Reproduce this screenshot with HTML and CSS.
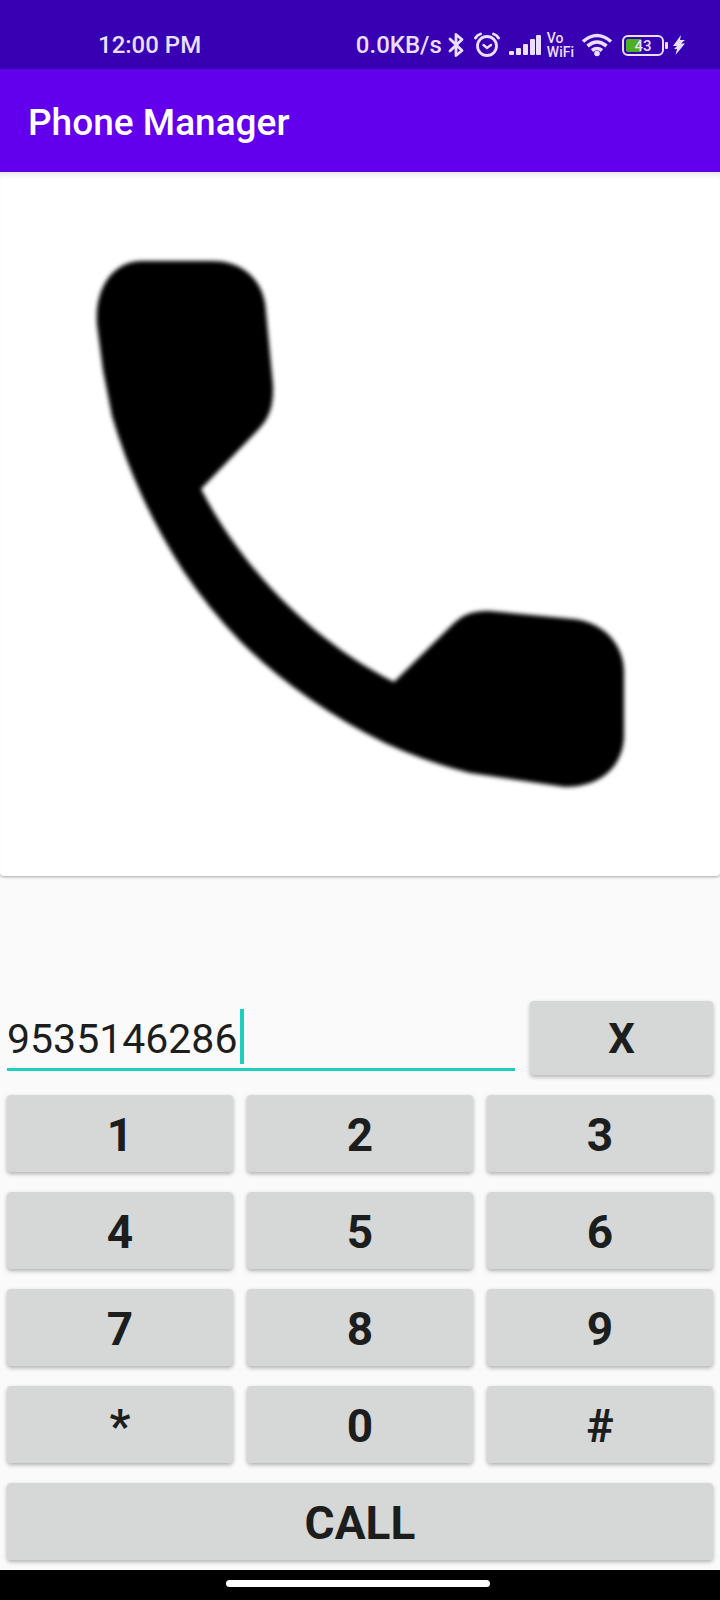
FILE: index.html
```html
<!DOCTYPE html>
<html lang="en">
<head>
<meta charset="utf-8">
<meta name="viewport" content="width=device-width, initial-scale=1">
<title>Phone Manager</title>
<link rel="stylesheet" href="styles.css">
</head>
<body>
<div class="status">
  <span class="clock">12:00 PM</span>
  <div class="indicators">
    <span class="speed">0.0KB/s</span>
    <svg class="bluetooth" viewBox="0 0 16 26" width="16" height="26"><path d="M2 7l12 11.500-6 5V2.500l6 5L2 19" fill="none" stroke="currentColor" stroke-width="2.800" stroke-linejoin="round" stroke-linecap="round"/></svg>
    <svg class="alarm" viewBox="0 0 26 26" width="26" height="26"><g fill="none" stroke="currentColor" stroke-linecap="round"><circle cx="13" cy="14" r="9.500" stroke-width="2.800"/><path d="M1.500 6Q3 3 6.500 2M24.500 6Q23 3 19.500 2" stroke-width="2.800"/><path d="M9.500 13l3.500 3 4-3" stroke-width="2.400"/></g></svg>
    <svg class="signal" viewBox="0 0 32 22" width="32" height="22"><g fill="currentColor"><rect x="0" y="17" width="5" height="4" rx="1"/><rect x="7" y="14" width="5" height="7" rx="1"/><rect x="14" y="10" width="5" height="11" rx="1"/><rect x="21" y="5" width="5" height="16" rx="1"/><rect x="27" y="1" width="5" height="20" rx="1"/></g></svg>
    <span class="vowifi"><span>Vo</span><span>WiFi</span></span>
    <svg class="wifi" viewBox="0 0 32 24" width="32" height="24"><g fill="none" stroke="currentColor" stroke-width="3.600"><path d="M2 8.500Q16-3.500 30 8.500"/><path d="M6.500 13Q16 5 25.500 13"/><path d="M11 17.500Q16 13.500 21 17.500"/></g><circle cx="16" cy="20.500" r="2.800" fill="currentColor"/></svg>
    <span class="battery"><span class="level">43</span></span>
    <svg class="bolt" viewBox="0 0 12 20" width="12" height="20"><path d="M8 0L0 11h4L1 14h3L2.500 20 12 8.500H8L12 5H7z" fill="currentColor"/></svg>
  </div>
</div>
<header class="appbar"><h1>Phone Manager</h1></header>
<main class="main">
  <div class="card">
    <svg class="handset" viewBox="0 172 720 704" role="img" aria-label="Phone"><path d="M142 261H213C244 261 265 282 266 312L273 385C274 408 268 420 258 430L201 489C240 565 310 640 394 682L452 625C464 613 474 611 490 611L573 619C604 622 624 645 624 672V735C624 765 602 787 565 787L470 773Q426 762 385 743Q346 724 310 699Q272 673 240 641Q209 609 184 572Q160 535 142 496Q124 457 112 416L103 370L97 325C94 287 114 261 142 261Z"/></svg>
  </div>
  <div class="entry">
    <label class="field">
      <input class="number" type="tel" value="9535146286" aria-label="Phone number">
      <span class="caret"></span>
    </label>
    <button class="key clear" type="button">X</button>
  </div>
  <div class="keypad">
    <button class="key" type="button">1</button>
    <button class="key" type="button">2</button>
    <button class="key" type="button">3</button>
    <button class="key" type="button">4</button>
    <button class="key" type="button">5</button>
    <button class="key" type="button">6</button>
    <button class="key" type="button">7</button>
    <button class="key" type="button">8</button>
    <button class="key" type="button">9</button>
    <button class="key" type="button">*</button>
    <button class="key" type="button">0</button>
    <button class="key" type="button">#</button>
    <button class="key call" type="button">CALL</button>
  </div>
</main>
<div class="navbar"><span class="pill"></span></div>
</body>
</html>
```

FILE: styles.css
```css
* {
  box-sizing: border-box;
}

body {
  margin: 0;
  min-height: 100vh;
  display: flex;
  flex-direction: column;
  background: #fafafa;
  color: #1c1e1d;
  font-family: Roboto, "Liberation Sans", sans-serif;
}

.status {
  display: flex;
  align-items: center;
  justify-content: space-between;
  padding: 21px 35px 0 98px;
  height: 69px;
  background: #3700b3;
  color: #eadfff;
  font-size: 24px;
  font-weight: 500;
  line-height: 28px;
}

.indicators {
  display: flex;
  align-items: center;
}

.bluetooth {
  margin-left: 6px;
}

.alarm {
  margin-left: 10px;
}

.signal {
  margin-left: 9px;
}

.vowifi {
  display: flex;
  flex-direction: column;
  margin-left: 6px;
  font-size: 14px;
  line-height: 14px;
}

.wifi {
  margin-left: 7px;
}

.battery {
  position: relative;
  display: flex;
  width: 42px;
  height: 21px;
  margin-left: 9px;
  padding: 2px;
  border: 2px solid currentColor;
  border-radius: 6px;
}

.battery::after {
  content: "";
  position: absolute;
  right: -6px;
  top: 5px;
  width: 3px;
  height: 7px;
  border-radius: 1px;
  background: currentColor;
}

.level {
  flex: 1;
  border-radius: 2px;
  background: linear-gradient(90deg, #4caf24 43%, transparent 43%);
  font-size: 15px;
  line-height: 14px;
  text-align: center;
}

.bolt {
  margin-left: 9px;
}

.appbar {
  display: flex;
  align-items: center;
  height: 103px;
  padding: 4px 28px 0;
  background: #6200ee;
  color: #fff;
}

.appbar h1 {
  margin: 0;
  font-size: 37px;
  font-weight: 500;
  line-height: 42px;
}

.main {
  flex: 1;
  display: flex;
  flex-direction: column;
}

.card {
  background: #fff;
  border-radius: 0 0 4px 4px;
  box-shadow: 0 1px 3px rgba(0, 0, 0, 0.35), inset 0 6px 6px -4px rgba(0, 0, 0, 0.12);
}

.handset {
  display: block;
  width: 100%;
  fill: #000;
  filter: blur(2px);
}

.entry {
  display: grid;
  grid-template-columns: 508fr 183fr;
  gap: 15px;
  margin-top: auto;
  padding: 24px 7px 0;
}

.field {
  position: relative;
  height: 70px;
  border-bottom: 3px solid #1fcfbd;
}

.number {
  display: block;
  width: 100%;
  height: 67px;
  padding: 8px 0 0;
  border: 0;
  outline: 0;
  background: none;
  color: #1c1e1d;
  font-family: inherit;
  font-size: 41px;
}

.caret {
  position: absolute;
  left: 233px;
  top: 8px;
  width: 4px;
  height: 55px;
  background: #1fcfbd;
}

.keypad {
  display: grid;
  grid-template-columns: repeat(3, 1fr);
  grid-auto-rows: 77px;
  gap: 20px 14px;
  padding: 20px 7px 10px;
}

.key {
  padding: 2px 0 0;
  border: 0;
  border-radius: 4px;
  background: #d6d8d7;
  box-shadow: 0 2px 4px rgba(0, 0, 0, 0.3);
  color: #1c1e1d;
  font-family: inherit;
  font-size: 46px;
  font-weight: 700;
  line-height: 54px;
}

.clear {
  height: 74px;
  font-size: 42px;
}

.call {
  grid-column: 1 / -1;
}

.navbar {
  display: flex;
  justify-content: center;
  height: 30px;
  padding: 10px 4px 0 0;
  background: #000;
}

.pill {
  width: 37%;
  height: 7px;
  border-radius: 4px;
  background: #fff;
}
```
